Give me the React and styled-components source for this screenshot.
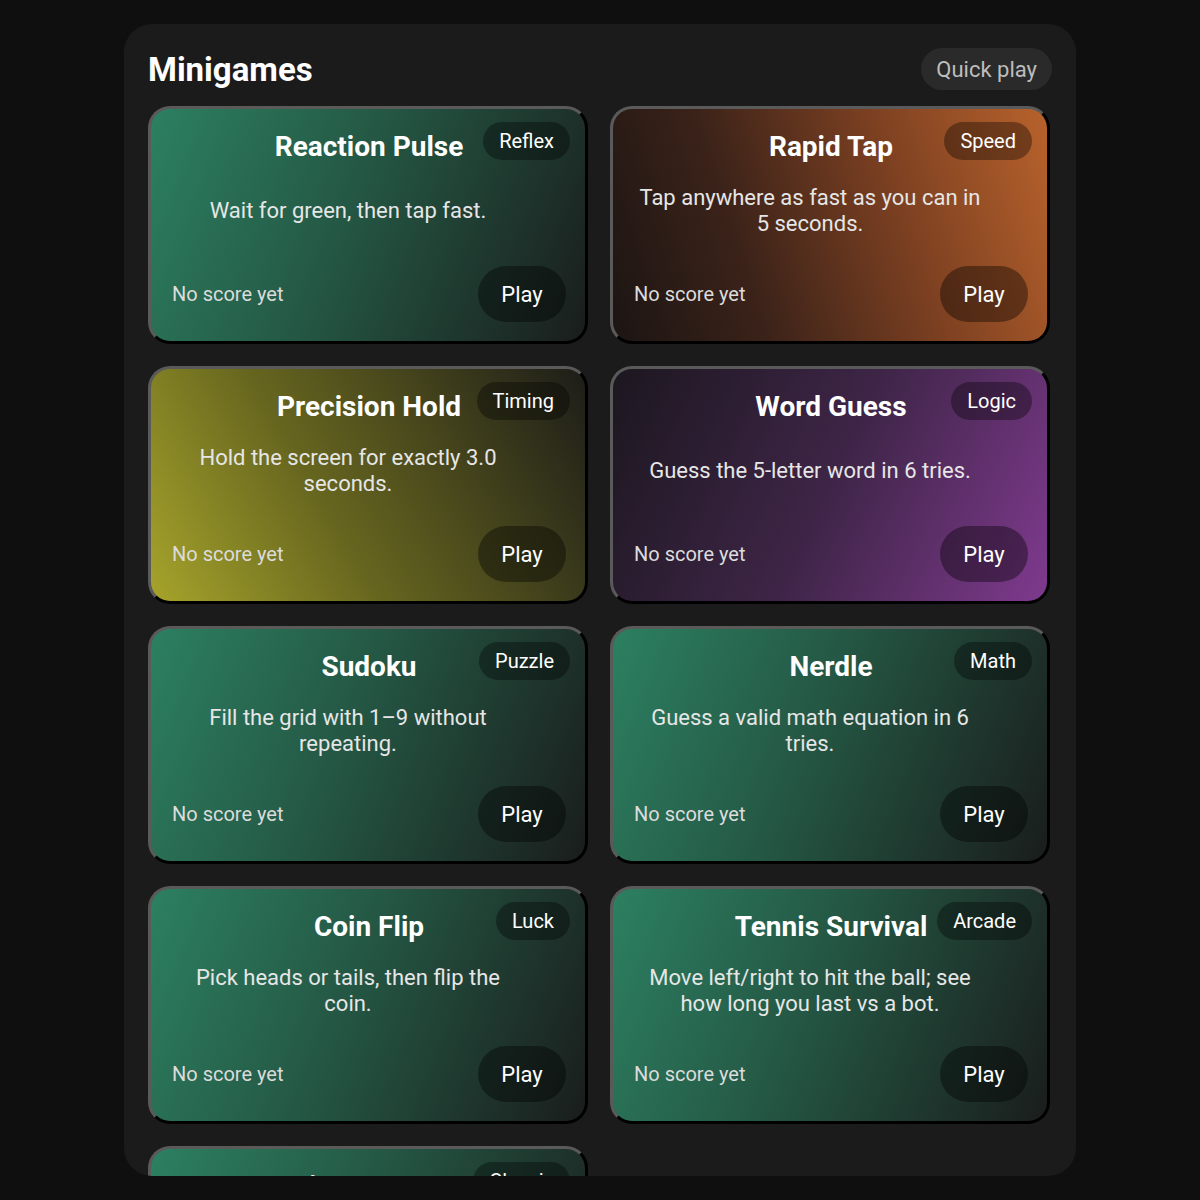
import React from "react";
import styled, { createGlobalStyle } from "styled-components";

const GlobalStyle = createGlobalStyle`
  body {
    margin: 0;
    background: #0f0f0f;
    font-family: Roboto, "Liberation Sans", sans-serif;
    color: #fff;
  }
`;

const themes = {
  green: "linear-gradient(112deg, #2c8061 0%, #245744 45%, #1a1d1c 100%)",
  orange: "linear-gradient(72deg, #1c1513 0%, #3a2219 30%, #7c4021 65%, #b8622c 100%)",
  olive: "linear-gradient(60deg, #a6a42b 0%, #67661f 40%, #1d1d19 100%)",
  purple: "linear-gradient(115deg, #1c171f 0%, #3e2547 50%, #7f3a8e 100%)",
};

const games = [
  { title: "Reaction Pulse", tag: "Reflex", desc: "Wait for green, then tap fast.", theme: "green" },
  { title: "Rapid Tap", tag: "Speed", desc: "Tap anywhere as fast as you can in 5 seconds.", theme: "orange" },
  { title: "Precision Hold", tag: "Timing", desc: "Hold the screen for exactly 3.0 seconds.", theme: "olive" },
  { title: "Word Guess", tag: "Logic", desc: "Guess the 5-letter word in 6 tries.", theme: "purple" },
  { title: "Sudoku", tag: "Puzzle", desc: "Fill the grid with 1–9 without repeating.", theme: "green" },
  { title: "Nerdle", tag: "Math", desc: "Guess a valid math equation in 6 tries.", theme: "green" },
  { title: "Coin Flip", tag: "Luck", desc: "Pick heads or tails, then flip the coin.", theme: "green" },
  { title: "Tennis Survival", tag: "Arcade", desc: "Move left/right to hit the ball; see how long you last vs a bot.", theme: "green" },
  { title: "Minesweeper", tag: "Classic", desc: "Clear the board without hitting a mine.", theme: "green" },
];

const Panel = styled.section`
  box-sizing: border-box;
  width: 952px;
  height: 1152px;
  margin: 24px auto 0;
  padding: 24px;
  background: #1b1b1b;
  border-radius: 28px;
  overflow: hidden;
`;

const Header = styled.header`
  display: flex;
  align-items: center;
  justify-content: space-between;
  height: 42px;
  margin-bottom: 16px;
`;

const Heading = styled.h1`
  margin: 0;
  font-size: 33px;
  font-weight: 700;
`;

const QuickPlay = styled.button`
  height: 42px;
  padding: 0 15px;
  border: none;
  border-radius: 21px;
  background: #2a2a2a;
  color: #bdbdbd;
  font-family: inherit;
  font-size: 22px;
`;

const Grid = styled.div`
  display: grid;
  grid-template-columns: 440px 440px;
  gap: 22px;
`;

const Card = styled.article`
  position: relative;
  box-sizing: border-box;
  height: 238px;
  display: flex;
  flex-direction: column;
  padding: 22px 19px 19px 21px;
  border: 3px solid;
  border-color: #5a5a5a #000 #000 #5a5a5a;
  border-radius: 22px;
  background: ${(p) => themes[p.$theme]};
`;

const Title = styled.h2`
  margin: 0;
  text-align: center;
  font-size: 28px;
  line-height: 32px;
  font-weight: 700;
`;

const Tag = styled.span`
  position: absolute;
  top: 13px;
  right: 15px;
  height: 38px;
  display: flex;
  align-items: center;
  padding: 0 16px;
  border-radius: 19px;
  background: rgba(0, 0, 0, 0.35);
  font-size: 20px;
`;

const Body = styled.div`
  flex: 1;
  display: flex;
  align-items: center;
  padding-bottom: 7px;
`;

const Desc = styled.p`
  width: 352px;
  margin: 0;
  text-align: center;
  font-size: 22px;
  line-height: 26px;
  color: #e6e6e6;
`;

const Footer = styled.div`
  display: flex;
  align-items: center;
  justify-content: space-between;
`;

const Score = styled.span`
  font-size: 20px;
  color: #dcdcdc;
`;

const PlayButton = styled.button`
  width: 88px;
  height: 56px;
  padding: 0;
  border: none;
  border-radius: 28px;
  background: rgba(0, 0, 0, 0.38);
  color: #fff;
  font-family: inherit;
  font-size: 22px;
`;

const GameCard = ({ game }) => (
  <Card $theme={game.theme}>
    <Title>{game.title}</Title>
    <Tag>{game.tag}</Tag>
    <Body>
      <Desc>{game.desc}</Desc>
    </Body>
    <Footer>
      <Score>No score yet</Score>
      <PlayButton>Play</PlayButton>
    </Footer>
  </Card>
);

export default function App() {
  return (
    <>
      <GlobalStyle />
      <Panel>
        <Header>
          <Heading>Minigames</Heading>
          <QuickPlay>Quick play</QuickPlay>
        </Header>
        <Grid>
          {games.map((g) => (
            <GameCard key={g.title} game={g} />
          ))}
        </Grid>
      </Panel>
    </>
  );
}
